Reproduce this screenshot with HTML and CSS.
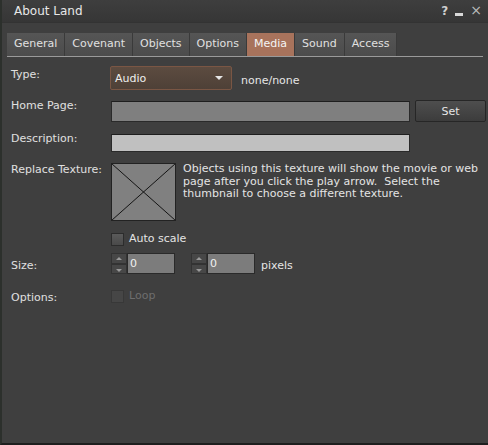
FILE: index.html
```html
<!DOCTYPE html>
<html lang="en">
<head>
    <meta charset="UTF-8">
    <title>About Land</title>
    <link rel="stylesheet" href="styles.css">
</head>
<body>
    <div class="floater">
        <div class="titleBar">
            <span class="title">About Land</span>
            <span class="titleBtns"><span class="helpBtn">?</span><span class="minBtn"></span><span class="closeBtn">&#215;</span></span>
        </div>
        <ul class="tabs">
            <li class="tab">General</li>
            <li class="tab">Covenant</li>
            <li class="tab">Objects</li>
            <li class="tab">Options</li>
            <li class="tab active">Media</li>
            <li class="tab">Sound</li>
            <li class="tab">Access</li>
        </ul>
        <div class="panel">
            <div class="row rowType">
                <span class="label">Type:</span>
                <div class="combo">Audio<span class="arrow"></span></div>
                <span class="note">none/none</span>
            </div>
            <div class="row rowHome">
                <span class="label">Home Page:</span>
                <div class="field homeField"></div>
                <button class="setBtn">Set</button>
            </div>
            <div class="row rowDesc">
                <span class="label">Description:</span>
                <div class="field descField"></div>
            </div>
            <div class="row rowTex">
                <span class="label">Replace Texture:</span>
                <div class="thumb">
                    <svg width="64" height="57" viewBox="0 0 64 57"><line x1="0" y1="0" x2="64" y2="57" stroke="#111" stroke-width="1"/><line x1="64" y1="0" x2="0" y2="57" stroke="#111" stroke-width="1"/></svg>
                </div>
                <p class="texHelp">Objects using this texture will show the movie or web page after you click the play arrow.&nbsp; Select the thumbnail to choose a different texture.</p>
            </div>
            <div class="row rowAuto">
                <span class="label"></span>
                <span class="check"></span><span class="checkText">Auto scale</span>
            </div>
            <div class="row rowSize">
                <span class="label">Size:</span>
                <div class="spinner">
                    <div class="spinBtns"><span class="up"></span><span class="down"></span></div>
                    <div class="spinVal">0</div>
                </div>
                <div class="spinner">
                    <div class="spinBtns"><span class="up"></span><span class="down"></span></div>
                    <div class="spinVal">0</div>
                </div>
                <span class="note">pixels</span>
            </div>
            <div class="row rowOpt">
                <span class="label">Options:</span>
                <span class="check disabled"></span><span class="checkText disabled">Loop</span>
            </div>
        </div>
    </div>
</body>
</html>
```
FILE: styles.css
```css
*{
    padding: 0;
    margin: 0;
    box-sizing: border-box;
}
ul{
    list-style: none;
}
body{
    width: 488px;
    height: 445px;
    background-color: #3e3e3e;
    font-family: "DejaVu Sans", sans-serif;
    font-size: 11px;
    color: #e6e6e6;
    overflow: hidden;
}
.floater{
    width: 488px;
    height: 445px;
    background-color: #3f3f3f;
    border-left: 2px solid #2c302c;
    border-bottom: 2px solid #1e1e1e;
    display: flex;
    flex-direction: column;
}
.titleBar{
    height: 23px;
    display: flex;
    align-items: center;
    justify-content: space-between;
    padding: 0 6px 0 12px;
    background: linear-gradient(#3e3e3e, #363636);
    border-bottom: 1px solid #333;
}
.title{
    font-size: 12px;
    color: #e8e8e8;
    margin-top: -1px;
}
.titleBtns{
    display: flex;
    align-items: center;
    gap: 7px;
    color: #cfcfcf;
    font-weight: bold;
}
.helpBtn{
    font-size: 12px;
}
.minBtn{
    width: 8px;
    height: 3px;
    background-color: #d8d8d8;
    margin-top: 7px;
}
.closeBtn{
    font-size: 14px;
    font-weight: normal;
    color: #bbbbbb;
    margin-top: -3px;
}
.tabs{
    display: flex;
    margin: 10px 5px 0 5px;
    height: 24px;
    border-bottom: 1px solid #9a9a9a;
}
.tab{
    height: 23px;
    line-height: 22px;
    padding: 0 7px;
    background: linear-gradient(#555555, #4c4c4c);
    border-right: 1px solid #3a3a3a;
    color: #e0e0e0;
    font-size: 11px;
}
.tab.active{
    background: #a8735c;
    color: #f5f5f5;
}
.panel{
    padding: 10px 0 0 9px;
    display: flex;
    flex-direction: column;
}
.row{
    display: flex;
    align-items: flex-start;
}
.label{
    width: 100px;
    flex: none;
    color: #e0e0e0;
}
.rowType{
    height: 34px;
}
.rowType .label{
    margin-top: 1px;
}
.combo{
    width: 122px;
    height: 24px;
    margin-left: -1px;
    margin-top: -1px;
    background: linear-gradient(#5c4b40, #4e4037);
    border: 1px solid #7a5644;
    border-radius: 2px;
    display: flex;
    align-items: center;
    justify-content: space-between;
    padding: 0 8px 0 4px;
    color: #eeeeee;
}
.arrow{
    width: 0;
    height: 0;
    border-left: 4px solid transparent;
    border-right: 4px solid transparent;
    border-top: 4px solid #e6e6e6;
}
.note{
    margin-left: 9px;
    margin-top: 7px;
}
.rowHome{
    height: 33px;
}
.rowHome .label{
    margin-top: -2px;
}
.field{
    width: 299px;
    height: 21px;
    border: 1px solid #2a2a2a;
    border-top-color: #1e1e1e;
}
.homeField{
    background-color: #7f7f7f;
}
.descField{
    height: 18px;
    background-color: #c0c0c0;
}
.setBtn{
    width: 71px;
    height: 22px;
    margin-left: 5px;
    margin-top: -1px;
    background: linear-gradient(#4e4e4e, #3c3c3c);
    border: 1px solid #262626;
    border-radius: 2px;
    color: #e6e6e6;
    font-family: "DejaVu Sans", sans-serif;
    font-size: 11px;
}
.rowDesc{
    height: 29px;
}
.rowDesc .label{
    margin-top: -2px;
}
.rowTex{
    height: 70px;
}
.thumb{
    width: 65px;
    height: 58px;
    background-color: #808080;
    border: 1px solid #222;
    flex: none;
    overflow: hidden;
    display: flex;
}
.thumb svg{
    display: block;
    width: 63px;
    height: 56px;
}
.texHelp{
    margin-left: 7px;
    line-height: 12.5px;
    color: #e4e4e4;
    width: 300px;
}
.rowAuto{
    height: 26px;
}
.check{
    width: 13px;
    height: 13px;
    background: linear-gradient(#5a5a5a, #4a4a4a);
    border: 1px solid #2c2c2c;
    flex: none;
}
.checkText{
    margin-left: 5px;
    margin-top: -1px;
    color: #e4e4e4;
}
.check.disabled{
    background: #464646;
    border-color: #383838;
}
.checkText.disabled{
    color: #6e6e6e;
}
.rowSize{
    height: 31px;
}
.spinner{
    display: flex;
    margin-right: 16px;
    margin-top: -6px;
    height: 21px;
}
.spinner + .spinner{
    margin-right: 0;
}
.spinBtns{
    width: 16px;
    display: flex;
    flex-direction: column;
}
.spinBtns span{
    flex: 1;
    background: #474747;
    border: 1px solid #333;
    position: relative;
}
.spinBtns .up::after,
.spinBtns .down::after{
    content: "";
    position: absolute;
    left: 4px;
    top: 3px;
    border-left: 3px solid transparent;
    border-right: 3px solid transparent;
}
.spinBtns .up::after{
    border-bottom: 3px solid #9a9a9a;
}
.spinBtns .down::after{
    top: 4px;
    border-top: 3px solid #9a9a9a;
}
.spinVal{
    width: 48px;
    background-color: #7c7c7c;
    border: 1px solid #2a2a2a;
    padding-left: 2px;
    line-height: 19px;
    color: #f0f0f0;
}
.rowSize .note{
    margin-left: 6px;
    margin-top: 0;
}
.rowOpt .label{
    margin-top: 1px;
}
```
